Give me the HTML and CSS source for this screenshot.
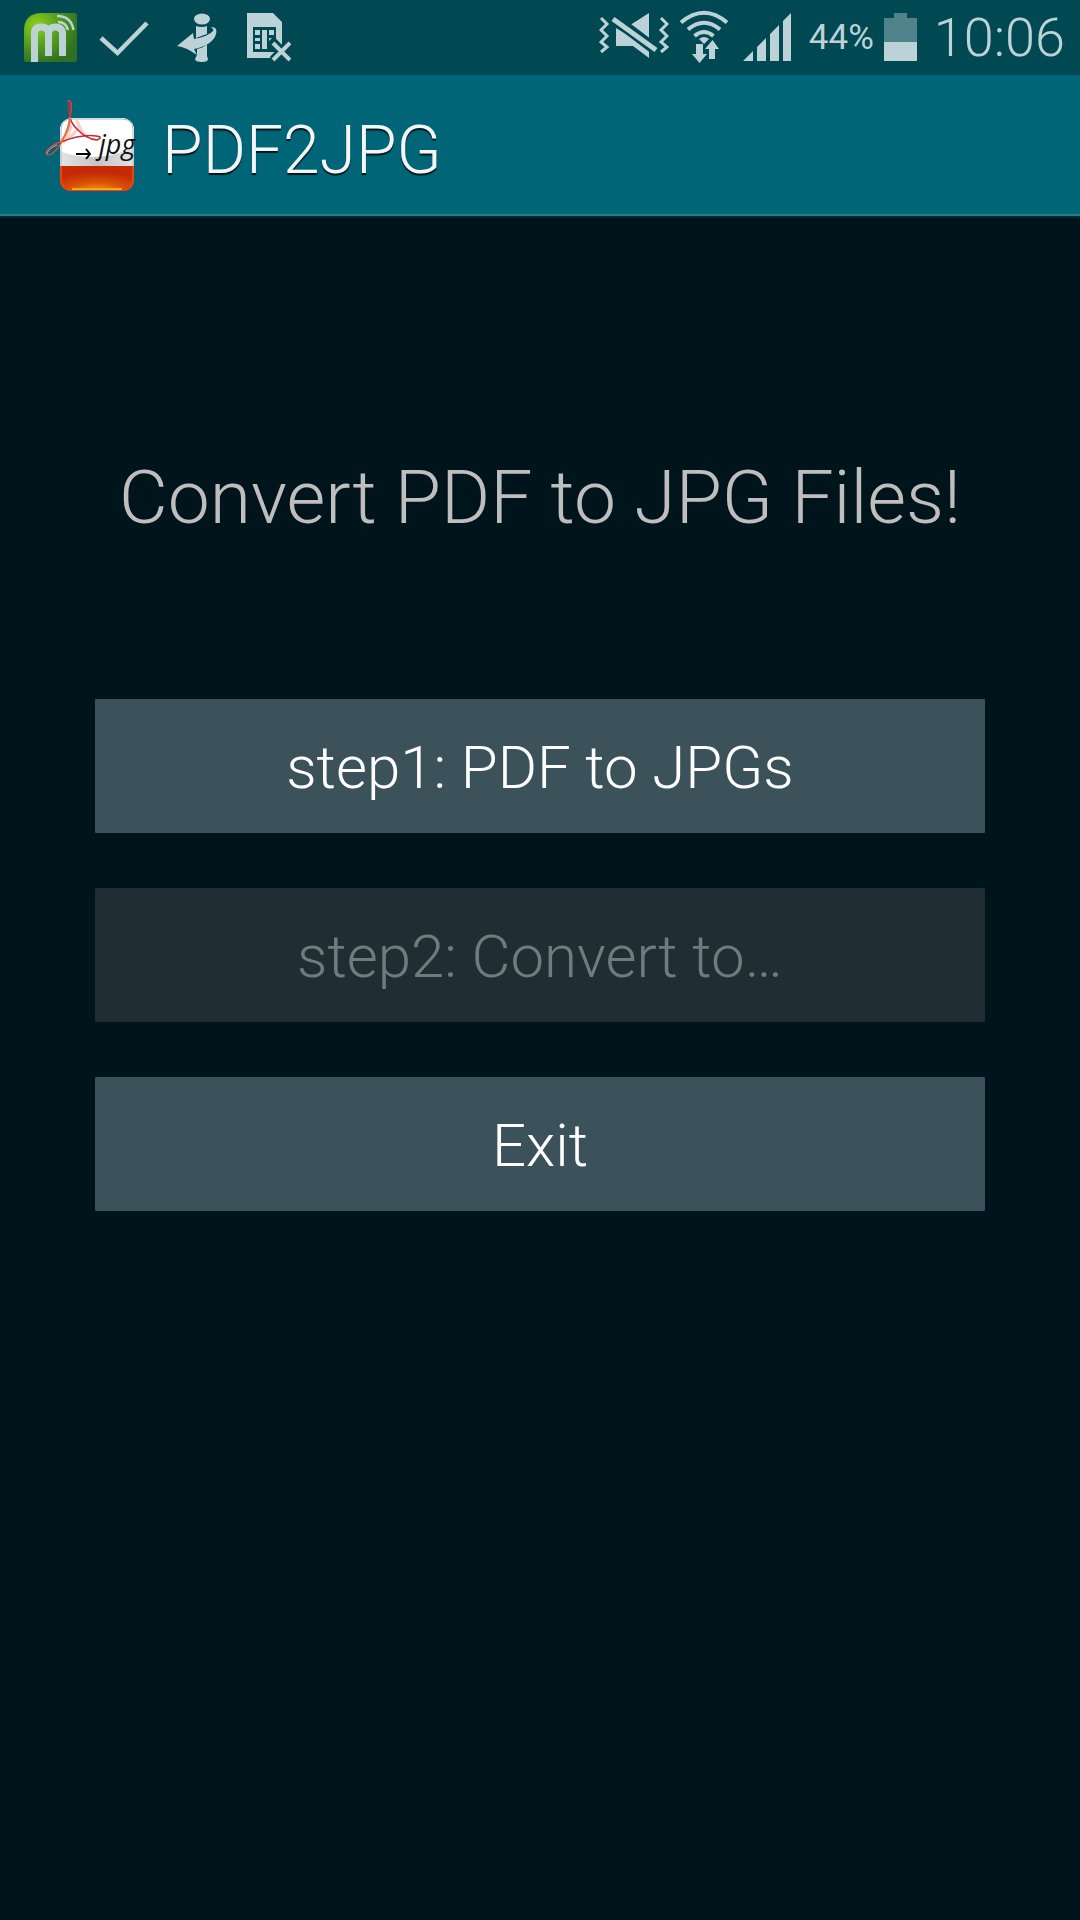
FILE: index.html
```html
<!DOCTYPE html>
<html lang="en">
<head>
    <meta charset="UTF-8">
    <meta name="viewport" content="width=device-width, initial-scale=1.0">
    <title>PDF2JPG</title>
    <link rel="stylesheet" href="styles.css">
</head>
<body>
    <div class="status-bar">
        <div class="notifications">
            <svg width="53" height="49" viewBox="0 0 53 49" aria-hidden="true">
                <defs>
                    <radialGradient id="green" cx="0.25" cy="0.25" r="0.8">
                        <stop offset="0" stop-color="#8fd01c"/>
                        <stop offset="0.5" stop-color="#569f1c"/>
                        <stop offset="1" stop-color="#2f7023"/>
                    </radialGradient>
                </defs>
                <path d="M0 18Q0 0 18 0H51Q53 0 53 2V47Q53 49 51 49H2Q0 49 0 47Z" fill="url(#green)"/>
                <path d="M10.500 49V20Q10.500 14 17 14Q24.500 14 24.500 21V43M24.500 21Q24.500 14 31 14Q38.500 14 38.500 21V43" fill="none" stroke="#bdd2d6" stroke-width="7"/>
                <path d="M33 3Q47 3 49.500 17M34 9Q42 9 44 17" fill="none" stroke="#bdd2d6" stroke-width="2.500"/>
            </svg>
            <svg width="50" height="49" viewBox="0 0 50 49" aria-hidden="true">
                <path d="M2 25L18.500 40L48 10" fill="none" stroke="#bdd2d6" stroke-width="4.500"/>
            </svg>
            <svg width="40" height="49" viewBox="0 0 40 49" aria-hidden="true">
                <g fill="#bdd2d6">
                    <ellipse cx="25" cy="6" rx="8" ry="5.500"/>
                    <path d="M19 13Q25 15 30 13V21L19 25Z"/>
                    <path d="M20 36Q26 35 30 31V43L31 46Q31 49 25 49Q18 49 18 46L20 42Z"/>
                    <path d="M0 33L16 20L17 26Q32 23 36 18Q37 16 34 14Q41 14 39 21Q36 32 17 36L20 42Q9 34 0 33Z"/>
                </g>
            </svg>
            <svg width="44" height="49" viewBox="0 0 44 49" aria-hidden="true">
                <path d="M0 0H26L35 9V29L28 36L35 29V45H0Z" fill="#bdd2d6"/>
                <path d="M6 14H29V39H6Z" fill="#004953"/>
                <path d="M8 17H13V22H8ZM15 17H20V36H15ZM22 17H27V22H22ZM8 25H13V28H8ZM8 31H13V36H8ZM22 25H25L22 28Z" fill="#bdd2d6"/>
                <path d="M26 29L43 47M43 29L26 47" fill="none" stroke="#004953" stroke-width="9"/>
                <path d="M26 30L43 47M43 30L26 47" fill="none" stroke="#bdd2d6" stroke-width="4"/>
            </svg>
        </div>
        <div class="system">
            <svg width="70" height="49" viewBox="0 0 70 49" aria-hidden="true">
                <g fill="none" stroke="#bdd2d6" stroke-width="3">
                    <path d="M2 6L8 12L2 18L8 24L2 30L8 35L2 40M62 6L68 12L62 18L68 24L62 30L68 35L62 40"/>
                </g>
                <path d="M32 12.500L50 1V26ZM17 16L50 36V46L34 34H17Z" fill="#bdd2d6"/>
                <path d="M16 7L57 38" stroke="#004953" stroke-width="11"/>
                <path d="M14 7L57 38" stroke="#bdd2d6" stroke-width="5"/>
            </svg>
            <svg width="50" height="54" viewBox="0 0 50 54" aria-hidden="true">
                <g fill="none" stroke="#bdd2d6" stroke-width="4">
                    <path d="M2 12.500Q25 -7 48 12.500"/>
                    <path d="M9 19.500Q25 6 41 19.500"/>
                    <path d="M15.500 26Q25 18 34.500 26"/>
                </g>
                <path d="M20 29Q25 25 30 29L25 34Z" fill="#bdd2d6"/>
                <path d="M17 34H24V44H28L20.500 53L13 44H17ZM30 49V39H26L33.500 30L40 39H36V49Z" fill="#bdd2d6"/>
            </svg>
            <svg class="signal" width="48" height="48" viewBox="0 0 48 48" aria-hidden="true">
                <path d="M0 48L10 38V48ZM14 34L23 25V48H14ZM27 21L36 12V48H27ZM40 8L48 0V48H40Z" fill="#bdd2d6"/>
            </svg>
            <span class="percent">44%</span>
            <svg width="33" height="48" viewBox="0 0 33 48" aria-hidden="true">
                <path d="M10 0H23V5H33V29H0V5H10Z" fill="#4f828a"/>
                <path d="M0 29H33V48H0Z" fill="#bdd2d6"/>
            </svg>
            <time class="clock">10:06</time>
        </div>
    </div>

    <header class="action-bar">
        <svg width="92" height="92" viewBox="0 0 92 92" aria-hidden="true">
            <defs>
                <clipPath id="tile"><rect x="16" y="18" width="74" height="73" rx="12"/></clipPath>
                <linearGradient id="silver" x1="0" y1="0" x2="1" y2="0">
                    <stop offset="0" stop-color="#e4e4e4"/>
                    <stop offset="0.5" stop-color="#c4c4c4"/>
                    <stop offset="1" stop-color="#e4e4e4"/>
                </linearGradient>
                <radialGradient id="fire" cx="0.5" cy="1" r="0.75">
                    <stop offset="0" stop-color="#f9a00c"/>
                    <stop offset="0.5" stop-color="#da5208"/>
                    <stop offset="1" stop-color="#c42a03"/>
                </radialGradient>
            </defs>
            <g clip-path="url(#tile)">
                <rect x="16" y="18" width="74" height="48" fill="url(#silver)"/>
                <ellipse cx="48" cy="31" rx="50" ry="26" fill="#fff"/>
                <rect x="16" y="66" width="74" height="26" fill="url(#fire)"/>
            </g>
            <path d="M17 66V79Q17 90 28 90H78Q89 90 89 79V66" fill="none" stroke="#f2420b" stroke-width="2"/>
            <path d="M28 89H78" fill="none" stroke="#fba514" stroke-width="2"/>
            <path d="M17 66V30Q17 19 28 19H78Q89 19 89 30V66" fill="none" stroke="#a9b9bd" stroke-width="1"/>
            <g fill="none" stroke-linecap="round">
                <path d="M33 21Q37 31 42 36M27 27Q24 36 20 42M20 41Q30 35 34 28" stroke="#f9cfca" stroke-width="3"/>
                <path d="M24 1Q28 -1 27 10Q26 27 17 43Q10 55 4 55Q-1 53 8 46Q14 42 17 42" stroke="#d8463a" stroke-width="1.500"/>
                <path d="M25 2Q23 20 33 29Q42 39 53 40Q60 37 52 36Q38 34 17 42" stroke="#cf2433" stroke-width="1.500"/>
                <path d="M26 18Q26 29 17 42" stroke="#e8743a" stroke-width="2"/>
                <path d="M3 53Q5 48 13 45" stroke="#e6a3a3" stroke-width="1"/>
            </g>
            <path d="M32 54H46M42 49L46 54L42 59" fill="none" stroke="#000" stroke-width="2"/>
            <text class="icon-label" x="55" y="54">jpg</text>
        </svg>
        <h1>PDF2JPG</h1>
    </header>

    <main class="content">
        <h2>Convert PDF to JPG Files!</h2>
        <div class="steps">
            <button type="button">step1: PDF to JPGs</button>
            <button type="button" disabled>step2: Convert to…</button>
            <button type="button">Exit</button>
        </div>
    </main>
</body>
</html>
```
FILE: styles.css
```css
* {
    box-sizing: border-box;
}
body {
    margin: 0;
    min-height: 100vh;
    background-color: #00151b;
    color: #fff;
    font-family: Roboto, sans-serif;
    font-weight: 300;
}
svg {
    display: block;
    flex-shrink: 0;
}
.status-bar {
    display: flex;
    justify-content: space-between;
    align-items: center;
    height: 75px;
    padding: 0 15px 0 24px;
    background-color: #004953;
    color: #bdd2d6;
}
.notifications {
    display: flex;
    align-items: center;
    gap: 30px;
    margin-right: 16px;
}
.notifications svg:nth-child(2) {
    margin: 0 -2px 0 -8px;
}
.system {
    display: flex;
    align-items: center;
    gap: 10px;
}
.system svg {
    margin-bottom: 2px;
}
.system .signal {
    margin-left: 4px;
}
.percent {
    margin-left: 8px;
    font-size: 35px;
    font-weight: 400;
}
.clock {
    margin-left: 7px;
    font-size: 54px;
    line-height: 72px;
}
.action-bar {
    display: flex;
    align-items: center;
    gap: 26px;
    height: 141px;
    padding: 2px 44px 0;
    background-color: #006577;
    border-bottom: 2px solid #277d8a;
    box-shadow: 0 2px 0 #002a32;
}
.action-bar h1 {
    margin: 0;
    padding-top: 10px;
    font-size: 66px;
    font-weight: 300;
    color: #f3f6f7;
    text-shadow: 0 2px 1px #00151b;
}
.icon-label {
    font-family: "Open Sans", sans-serif;
    font-size: 27px;
    font-style: italic;
    font-weight: 400;
    fill: #111;
}
.content {
    padding: 237px 95px 80px;
}
.content h2 {
    margin: 0 -20px 158px;
    font-size: 75px;
    font-weight: 300;
    line-height: 88px;
    text-align: center;
    color: #bebebe;
}
.steps {
    display: flex;
    flex-direction: column;
    gap: 55px;
}
.steps button {
    min-height: 134px;
    padding: 2px 20px 0;
    border: none;
    border-radius: 1px;
    background-color: #3b525b;
    color: #fff;
    font-family: inherit;
    font-size: 60px;
    font-weight: 300;
    cursor: pointer;
}
.steps button:disabled {
    background-color: #202d32;
    color: #707b7e;
    cursor: default;
}
```
